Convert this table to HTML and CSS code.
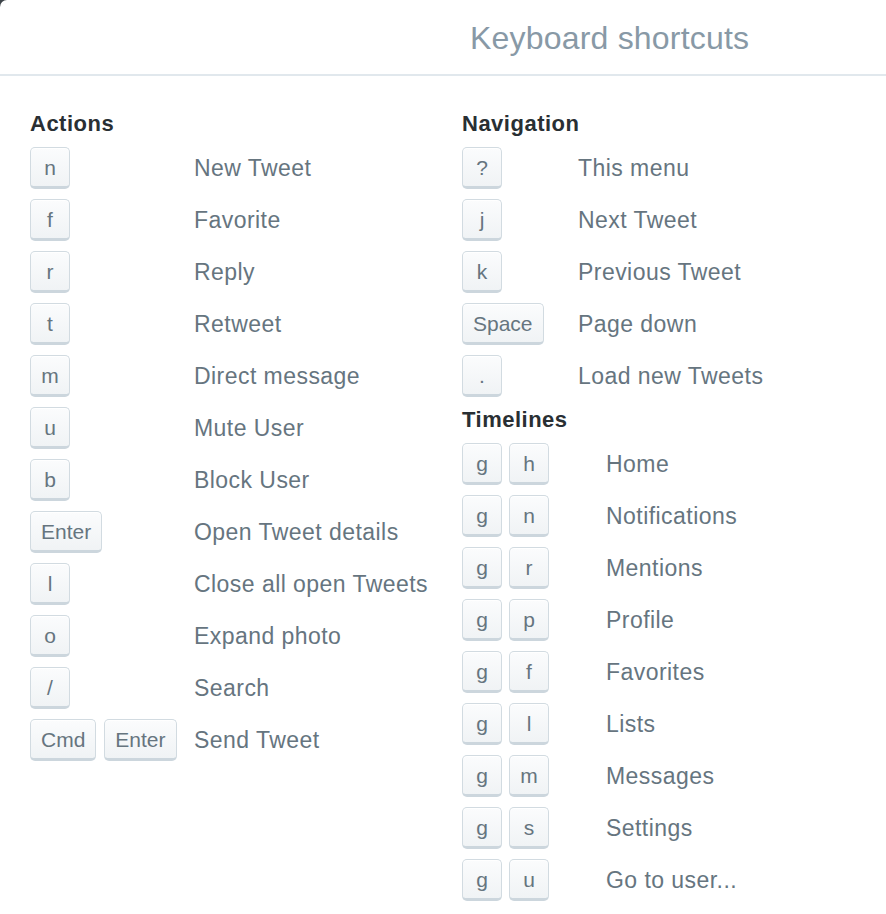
FILE: index.html
```html
<!DOCTYPE html>
<html lang="en">
<head>
<meta charset="utf-8">
<title>Keyboard shortcuts</title>
<link rel="stylesheet" href="styles.css">
</head>
<body>
<div class="modal">
  <header class="modal-header">
    <h1 class="title">Keyboard shortcuts</h1>
  </header>
  <div class="modal-body">
    <section class="col col-left">
      <h2 class="heading">Actions</h2>
      <dl class="list list-actions">
        <div class="row"><dt class="keys"><kbd class="key">n</kbd></dt><dd class="desc">New Tweet</dd></div>
        <div class="row"><dt class="keys"><kbd class="key">f</kbd></dt><dd class="desc">Favorite</dd></div>
        <div class="row"><dt class="keys"><kbd class="key">r</kbd></dt><dd class="desc">Reply</dd></div>
        <div class="row"><dt class="keys"><kbd class="key">t</kbd></dt><dd class="desc">Retweet</dd></div>
        <div class="row"><dt class="keys"><kbd class="key">m</kbd></dt><dd class="desc">Direct message</dd></div>
        <div class="row"><dt class="keys"><kbd class="key">u</kbd></dt><dd class="desc">Mute User</dd></div>
        <div class="row"><dt class="keys"><kbd class="key">b</kbd></dt><dd class="desc">Block User</dd></div>
        <div class="row"><dt class="keys"><kbd class="key">Enter</kbd></dt><dd class="desc">Open Tweet details</dd></div>
        <div class="row"><dt class="keys"><kbd class="key">l</kbd></dt><dd class="desc">Close all open Tweets</dd></div>
        <div class="row"><dt class="keys"><kbd class="key">o</kbd></dt><dd class="desc">Expand photo</dd></div>
        <div class="row"><dt class="keys"><kbd class="key">/</kbd></dt><dd class="desc">Search</dd></div>
        <div class="row"><dt class="keys"><kbd class="key">Cmd</kbd><kbd class="key">Enter</kbd></dt><dd class="desc">Send Tweet</dd></div>
      </dl>
    </section>
    <section class="col col-right">
      <h2 class="heading">Navigation</h2>
      <dl class="list list-nav">
        <div class="row"><dt class="keys"><kbd class="key">?</kbd></dt><dd class="desc">This menu</dd></div>
        <div class="row"><dt class="keys"><kbd class="key">j</kbd></dt><dd class="desc">Next Tweet</dd></div>
        <div class="row"><dt class="keys"><kbd class="key">k</kbd></dt><dd class="desc">Previous Tweet</dd></div>
        <div class="row"><dt class="keys"><kbd class="key">Space</kbd></dt><dd class="desc">Page down</dd></div>
        <div class="row"><dt class="keys"><kbd class="key">.</kbd></dt><dd class="desc">Load new Tweets</dd></div>
      </dl>
      <h2 class="heading">Timelines</h2>
      <dl class="list list-timelines">
        <div class="row"><dt class="keys"><kbd class="key">g</kbd><kbd class="key">h</kbd></dt><dd class="desc">Home</dd></div>
        <div class="row"><dt class="keys"><kbd class="key">g</kbd><kbd class="key">n</kbd></dt><dd class="desc">Notifications</dd></div>
        <div class="row"><dt class="keys"><kbd class="key">g</kbd><kbd class="key">r</kbd></dt><dd class="desc">Mentions</dd></div>
        <div class="row"><dt class="keys"><kbd class="key">g</kbd><kbd class="key">p</kbd></dt><dd class="desc">Profile</dd></div>
        <div class="row"><dt class="keys"><kbd class="key">g</kbd><kbd class="key">f</kbd></dt><dd class="desc">Favorites</dd></div>
        <div class="row"><dt class="keys"><kbd class="key">g</kbd><kbd class="key">l</kbd></dt><dd class="desc">Lists</dd></div>
        <div class="row"><dt class="keys"><kbd class="key">g</kbd><kbd class="key">m</kbd></dt><dd class="desc">Messages</dd></div>
        <div class="row"><dt class="keys"><kbd class="key">g</kbd><kbd class="key">s</kbd></dt><dd class="desc">Settings</dd></div>
        <div class="row"><dt class="keys"><kbd class="key">g</kbd><kbd class="key">u</kbd></dt><dd class="desc">Go to user...</dd></div>
      </dl>
    </section>
  </div>
</div>
</body>
</html>
```
FILE: styles.css
```css
html, body {
  margin: 0;
  padding: 0;
}

body {
  background: #3d4449;
  font-family: "Liberation Sans", Arial, Helvetica, sans-serif;
  overflow: hidden;
}

.modal {
  background: #ffffff;
  border-top-left-radius: 7px;
  min-height: 914px;
}

.modal-header {
  box-sizing: border-box;
  height: 76px;
  border-bottom: 2px solid #e1e8ed;
  display: flex;
  align-items: center;
  padding-left: 470px;
}

.title {
  margin: 0;
  font-size: 32px;
  font-weight: normal;
  letter-spacing: 0.2px;
  color: #8899a6;
  line-height: 1;
  padding-top: 1px;
}

.modal-body {
  display: flex;
  padding: 30px 0 0 30px;
}

.col-left {
  width: 432px;
  flex: none;
}

.col-right {
  flex: 1;
}

.heading {
  margin: 0;
  height: 36px;
  line-height: 36px;
  font-size: 22px;
  font-weight: bold;
  letter-spacing: 0.5px;
  color: #292f33;
}

.list {
  margin: 0;
  padding: 0;
}

.row {
  display: grid;
  height: 52px;
  align-items: center;
}

.list-actions .row {
  grid-template-columns: 164px 1fr;
}

.list-nav .row {
  grid-template-columns: 116px 1fr;
}

.list-timelines .row {
  grid-template-columns: 144px 1fr;
}

.keys {
  margin: 0;
  display: flex;
  gap: 8px;
}

.list-timelines .keys {
  gap: 7px;
}

.key {
  box-sizing: border-box;
  display: inline-flex;
  align-items: center;
  justify-content: center;
  height: 42px;
  min-width: 40px;
  padding: 1px 10px 0;
  font-family: "Liberation Sans", Arial, Helvetica, sans-serif;
  font-size: 21px;
  color: #66757f;
  background: linear-gradient(#fbfcfd, #f0f3f5);
  border: 1px solid #d2dbe1;
  border-bottom: 3px solid #ccd6dd;
  border-radius: 5px;
  box-shadow: inset 0 1px 0 #ffffff;
}

.desc {
  margin: 0;
  font-size: 23px;
  letter-spacing: 0.45px;
  color: #66757f;
  white-space: nowrap;
}
```
